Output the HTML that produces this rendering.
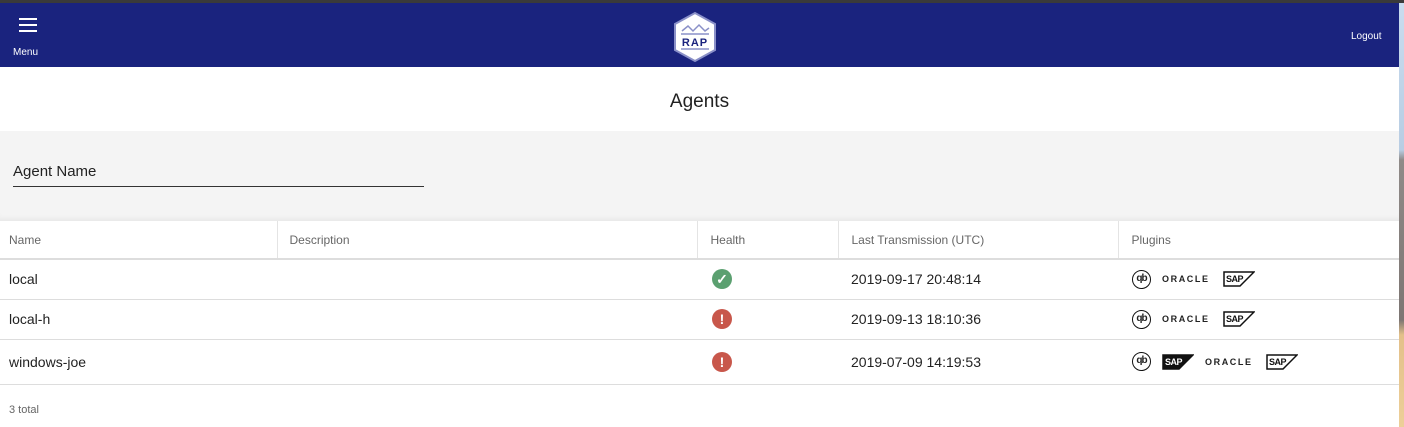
<!DOCTYPE html>
<html><head><meta charset="utf-8"><style>
*{box-sizing:border-box;margin:0;padding:0}
body{width:1404px;height:427px;overflow:hidden;font-family:"Liberation Sans",Arial,sans-serif;background:#fff;position:relative}
.bg{position:absolute;left:1399px;top:0;width:5px;height:427px;background:linear-gradient(#3a3a3a 0 3px,#c9dcef 3px,#b8cde3 150px,#8f8a88 160px,#7d7673 320px,#e3c08a 335px,#edcf98)}
.top{position:absolute;left:0;top:0;width:1399px;height:3px;background:#3a3a3a}
.hdr{position:absolute;left:0;top:3px;width:1399px;height:64px;background:#1a237e;color:#fff}
.main{position:absolute;left:0;top:67px;width:1399px;height:360px;background:#fff}
.title{position:absolute;top:24px;width:100%;text-align:center;font-size:19px;color:#222}
.grey{position:absolute;top:64px;left:0;width:1399px;height:90px;background:#f4f4f4;box-shadow:inset 0 -6px 6px -4px rgba(0,0,0,.06)}
.in{position:absolute;left:13px;top:32px;width:411px;border-bottom:1px solid #333;font-size:15px;color:#222;padding-bottom:6px}
table{position:absolute;top:154px;left:0;width:1399px;border-collapse:collapse;font-size:14px;color:#222}
th{font-weight:normal;font-size:12px;color:#666;text-align:left;height:38px;padding-left:9px;border-right:1px solid #e4e4e4;border-bottom:2px solid #ddd}
th:last-child{border-right:none}
td{padding-left:9px;height:40px;border-bottom:1px solid #ddd}
tr.l td{height:45px}
.ic{display:inline-block;width:20px;height:20px;border-radius:50%;color:#fff;text-align:center;font-weight:bold;font-size:14px;line-height:20px;margin-left:2px}
.ok{background:#5ba070}.bad{background:#c8574b}
.p{display:inline-flex;align-items:center;gap:11px;vertical-align:middle}
.qb{width:19px;height:19px;border:1.5px solid #111;border-radius:50%;font-size:10px;font-weight:bold;text-align:center;line-height:16px;letter-spacing:-1px}
.or{font-size:9px;font-weight:bold;letter-spacing:1.6px;margin-right:2px}
</style></head><body>
<div class="bg"></div><div class="top"></div>
<div class="hdr">
<div style="position:absolute;left:19px;top:15px;width:18px">
<div style="height:2px;background:#fff;margin-bottom:4px"></div><div style="height:2px;background:#fff;margin-bottom:4px"></div><div style="height:2px;background:#fff"></div></div>
<div style="position:absolute;left:13px;top:44px;font-size:10px">Menu</div>
<svg style="position:absolute;left:672px;top:8px" width="46" height="52" viewBox="0 0 46 52"><polygon points="23,2 43,13 43,39 23,50 3,39 3,13" fill="#fff" stroke="#8a90c8" stroke-width="2"/><polyline points="10,20 16,15 21,20 27,14 33,20 37,17" fill="none" stroke="#8a90c8" stroke-width="1.5"/><line x1="9" y1="23" x2="37" y2="23" stroke="#8a90c8" stroke-width="1.5"/><text x="23" y="35" text-anchor="middle" font-family="Liberation Sans" font-weight="bold" font-size="11" fill="#1a237e" letter-spacing="1">RAP</text><line x1="9" y1="38" x2="37" y2="38" stroke="#8a90c8" stroke-width="1.5"/></svg>
<div style="position:absolute;left:1351px;top:28px;font-size:10px">Logout</div>
</div>
<div class="main">
<div class="title">Agents</div>
<div class="grey"><div class="in">Agent Name</div></div>
<table>
<tr><th style="width:277px">Name</th><th style="width:420px;padding-left:12px">Description</th><th style="width:141px;padding-left:13px">Health</th><th style="width:280px;padding-left:13px">Last Transmission (UTC)</th><th style="padding-left:13px">Plugins</th></tr>
<tr><td>local</td><td></td><td style="padding-left:13px"><span class="ic ok">✓</span></td><td style="padding-left:13px">2019-09-17 20:48:14</td><td style="padding-left:14px"><span class="p"><span class="qb">qb</span><span class="or">ORACLE</span><svg width="32" height="16"><polygon points="1,1 31,1 17,15 1,15" fill="#fff" stroke="#111" stroke-width="1.5"/><text x="3" y="11" font-family="Liberation Sans" font-weight="bold" font-size="9" fill="#111" letter-spacing="-.5">SAP</text></svg></span></td></tr>
<tr><td>local-h</td><td></td><td style="padding-left:13px"><span class="ic bad">!</span></td><td style="padding-left:13px">2019-09-13 18:10:36</td><td style="padding-left:14px"><span class="p"><span class="qb">qb</span><span class="or">ORACLE</span><svg width="32" height="16"><polygon points="1,1 31,1 17,15 1,15" fill="#fff" stroke="#111" stroke-width="1.5"/><text x="3" y="11" font-family="Liberation Sans" font-weight="bold" font-size="9" fill="#111" letter-spacing="-.5">SAP</text></svg></span></td></tr>
<tr class="l"><td>windows-joe</td><td></td><td style="padding-left:13px"><span class="ic bad">!</span></td><td style="padding-left:13px">2019-07-09 14:19:53</td><td style="padding-left:14px"><span class="p"><span class="qb">qb</span><svg width="32" height="16"><polygon points="1,1 31,1 17,15 1,15" fill="#111" stroke="#111" stroke-width="1.5"/><text x="3" y="11" font-family="Liberation Sans" font-weight="bold" font-size="9" fill="#fff" letter-spacing="-.5">SAP</text></svg><span class="or">ORACLE</span><svg width="32" height="16"><polygon points="1,1 31,1 17,15 1,15" fill="#fff" stroke="#111" stroke-width="1.5"/><text x="3" y="11" font-family="Liberation Sans" font-weight="bold" font-size="9" fill="#111" letter-spacing="-.5">SAP</text></svg></span></td></tr>
</table>
<div style="position:absolute;left:9px;top:337px;font-size:11px;color:#666">3 total</div>
</div>
</body></html>
